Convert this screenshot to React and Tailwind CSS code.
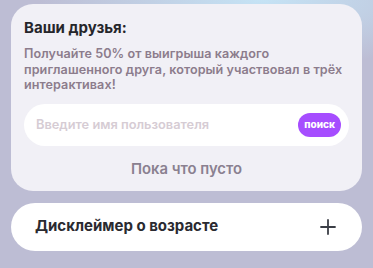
import React from "react";

const Friends = () => {
  return (
    <section className="bg-[#f1f0f6] rounded-[22px] px-[13px] pt-[14px] pb-[11px]">
      <h2 className="text-[15px] font-bold text-[#26262b] leading-5">Ваши друзья:</h2>
      <p className="mt-[8px] text-[12.6px] font-semibold leading-[15.5px] text-[#8c7c8c] tracking-[0.005em]">
        Получайте 50% от выигрыша каждого приглашенного друга, который участвовал в трёх интерактивах!
      </p>
      <div className="mt-[11px] h-[42px] bg-white rounded-full flex items-center pl-[12px] pr-[8px]">
        <input
          className="flex-1 min-w-0 bg-transparent outline-none text-[12.8px] font-semibold text-[#333] placeholder:text-[#d6ccd4]"
          placeholder="Введите имя пользователя"
        />
        <button className="h-[24px] px-[6px] rounded-full bg-[#a64dff] text-white text-[10px] font-extrabold">
          поиск
        </button>
      </div>
      <div className="mt-[12px] text-center text-[14.8px] font-semibold text-[#8a8090]">Пока что пусто</div>
    </section>
  );
};

export default function App() {
  return (
    <main
      className="w-[373px] h-[268px] overflow-hidden bg-[#bdbdd4] px-[11px] pt-[4px] flex flex-col gap-[12px] bg-[radial-gradient(ellipse_60%_25%_at_70%_0%,#c5e3f5,transparent)]"
      style={{ fontFamily: "Inter, 'Noto Sans', sans-serif" }}
    >
      <Friends />
      <button className="h-[48px] shrink-0 bg-white rounded-full flex items-center justify-between pl-[24px] pr-[26px]">
        <span className="text-[15px] font-bold text-[#2a2a30]">Дисклеймер о возрасте</span>
        <svg width="16" height="16" viewBox="0 0 16 16" fill="none" stroke="#3b3e46" strokeWidth="1.8" strokeLinecap="round">
          <path d="M8 1v14M1 8h14" />
        </svg>
      </button>
    </main>
  );
}
